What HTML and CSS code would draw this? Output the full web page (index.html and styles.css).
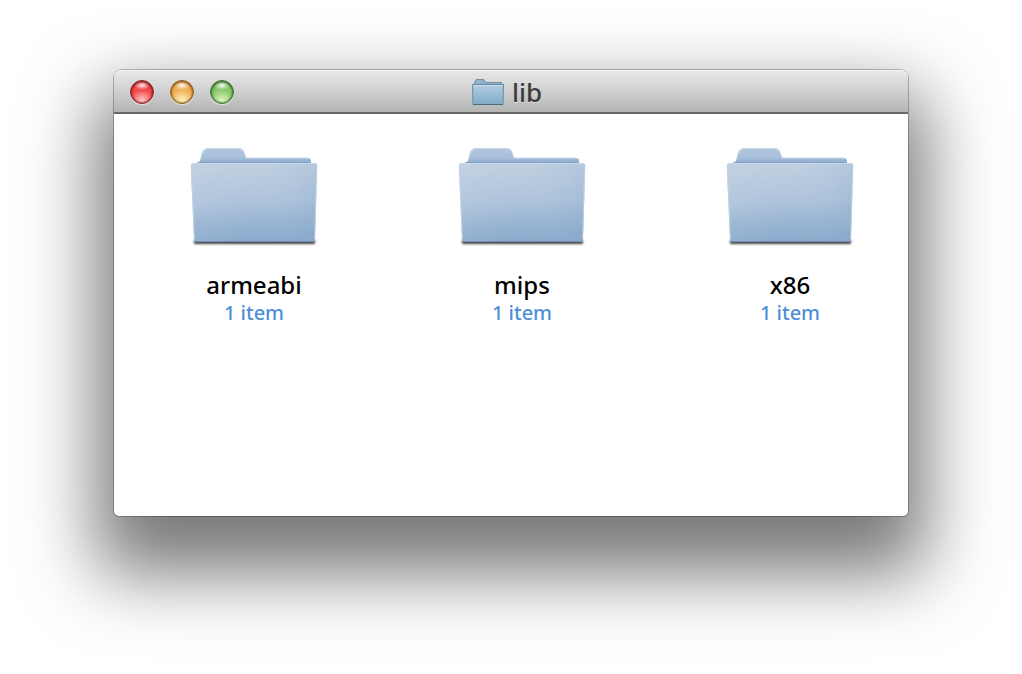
FILE: index.html
```html
<!DOCTYPE html>
<html lang="en">
<head>
<meta charset="utf-8">
<title>lib</title>
<link rel="stylesheet" href="styles.css">
</head>
<body>
<svg class="defs" aria-hidden="true">
  <defs>
    <linearGradient id="front" x1="0.4" y1="0" x2="0.5" y2="1">
      <stop offset="0" stop-color="#c1d0e1"/>
      <stop offset="0.5" stop-color="#adc3db"/>
      <stop offset="0.8" stop-color="#95b2d1"/>
      <stop offset="1" stop-color="#8baacc"/>
    </linearGradient>
    <linearGradient id="sheen" x1="0" y1="0" x2="1" y2="0">
      <stop offset="0" stop-color="#fff" stop-opacity="0.04"/>
      <stop offset="0.5" stop-color="#c3d2e2" stop-opacity="0"/>
      <stop offset="1" stop-color="#85a6cc" stop-opacity="0.2"/>
    </linearGradient>
    <linearGradient id="back" x1="0" y1="0" x2="0" y2="1">
      <stop offset="0" stop-color="#b4c8de"/>
      <stop offset="0.4" stop-color="#a6bfda"/>
      <stop offset="0.66" stop-color="#86a5c8"/>
    </linearGradient>
    <linearGradient id="mini" x1="0" y1="0" x2="0" y2="1">
      <stop offset="0" stop-color="#b3cde0"/>
      <stop offset="1" stop-color="#7faccb"/>
    </linearGradient>
    <filter id="soft" x="-10%" y="-200%" width="120%" height="500%"><feGaussianBlur stdDeviation="1"/></filter>
    <symbol id="folder" viewBox="0 0 128 100">
      <rect x="4" y="92" width="121" height="4" rx="1" fill="#222" opacity="0.85" filter="url(#soft)"/>
      <path d="M7 24V16q0-2 3-3l2-8q1-4.500 5-4.500H49q4 0 5 4L56 10H118q3 0 3 3v11z" fill="url(#back)"/>
      <path d="M13 6q1-5 4-5.500H49q4 0 5 4L56 10H118" fill="none" stroke="#c6d5e5" stroke-width="1"/>
      <path d="M7 14.500H121" stroke="#7d9fc6" stroke-width="1" opacity="0.6"/>
      <path d="M4 15H124q3.500 0 3.300 3.500L125 92q0 2-2 2H6q-2 0-2-2L.7 18.500Q.5 15 4 15z" fill="url(#front)"/>
      <path d="M4 15H124q3.500 0 3.300 3.500L125 92q0 2-2 2H6q-2 0-2-2L.7 18.500Q.5 15 4 15z" fill="url(#sheen)"/>
      <path d="M2 16.500q1-1 3-1H123q2 0 3 1" fill="none" stroke="#c8d6e6"/>
      <path d="M1.300 19 4.500 91M126.700 19 124.500 91" stroke="#c8d7e6" stroke-width="1" opacity="0.7"/>
      <path d="M5 93.500H124" stroke="#6f8fb4" stroke-width="1"/>
      <path d="M87 21h1M44 10h1M32 25h1M106 22h1M113 42h1M124 46h1M68 63h1M54 40h1M73 42h1M21 57h1M83 30h1M103 71h1M76 69h1M29 73h1M114 87h1M91 56h1M63 50h1M18 36h1M96 83h1M46 67h1M116 30h1" stroke="#7797bd" stroke-width="1" opacity="0.4"/>
    </symbol>
    <symbol id="folder-mini" viewBox="0 0 32 26">
      <path d="M2.500 5V3.500L4 .5H12l1.500 3H29.500V6H2.500z" fill="#91b4cd" stroke="#6f91a9"/>
      <path d="M.5 5.500H31.500L31 25.500H1z" fill="url(#mini)" stroke="#668ca6"/>
      <path d="M1.500 6.500H30.500" stroke="#c9dde9"/>
      <path d="M1 25.500H31" stroke="#456a82"/>
    </symbol>
  </defs>
</svg>
<main class="window">
  <header class="titlebar">
    <div class="controls">
      <button class="light close" aria-label="Close"></button>
      <button class="light minimize" aria-label="Minimize"></button>
      <button class="light zoom" aria-label="Zoom"></button>
    </div>
    <h1 class="title"><svg class="title-icon" aria-hidden="true"><use href="#folder-mini"/></svg>lib</h1>
  </header>
  <ul class="items">
    <li><a class="item" href="#armeabi"><svg class="item-icon" aria-hidden="true"><use href="#folder"/></svg><span class="name">armeabi</span><span class="info">1 item</span></a></li>
    <li><a class="item" href="#mips"><svg class="item-icon" aria-hidden="true"><use href="#folder"/></svg><span class="name">mips</span><span class="info">1 item</span></a></li>
    <li><a class="item" href="#x86"><svg class="item-icon" aria-hidden="true"><use href="#folder"/></svg><span class="name">x86</span><span class="info">1 item</span></a></li>
  </ul>
</main>
</body>
</html>
```
FILE: styles.css
```css
* {
  box-sizing: border-box;
}

body {
  margin: 0;
  min-height: 100vh;
  padding: 70px 114px 158px;
  display: flex;
  background: #fff;
  font-family: "Noto Sans", "Open Sans", sans-serif;
}

.defs {
  position: absolute;
  width: 0;
  height: 0;
}

.window {
  flex: 1;
  background: #fff;
  border-radius: 8px 8px 5px 5px;
  box-shadow: 0 0 0 1px rgba(0, 0, 0, 0.25), 0 40px 72px 18px rgba(0, 0, 0, 0.53);
}

.titlebar {
  height: 44px;
  padding: 2px 24px 0 16px;
  display: grid;
  grid-template-columns: 1fr auto 1fr;
  align-items: center;
  border-bottom: 2px solid #686868;
  border-radius: 8px 8px 0 0;
  background: linear-gradient(#e9e9e9, #d0d0d0 50%, #b4b4b4);
  box-shadow: inset 0 1px 0 #f4f4f4;
}

.controls {
  display: flex;
  gap: 16px;
}

.light {
  width: 24px;
  height: 24px;
  padding: 0;
  border: 1px solid;
  border-radius: 50%;
}

.close {
  border-color: #86282a;
  background:
    radial-gradient(ellipse 8px 5px at 50% 18%, rgba(255, 255, 255, 0.9), transparent),
    radial-gradient(ellipse 12px 11px at 50% 90%, #fccfcd, transparent),
    #f34a4b;
  box-shadow: inset 0 1px 3px #6d1013, inset 0 0 2px #8f2527, 0 1px 1px rgba(255, 255, 255, 0.6);
}

.minimize {
  border-color: #8a5b22;
  background:
    radial-gradient(ellipse 8px 5px at 50% 18%, rgba(255, 255, 255, 0.95), transparent),
    radial-gradient(ellipse 12px 11px at 50% 90%, #fdf6c0, transparent),
    #f0b056;
  box-shadow: inset 0 1px 3px #834808, inset 0 0 2px #99672a, 0 1px 1px rgba(255, 255, 255, 0.6);
}

.zoom {
  border-color: #40702e;
  background:
    radial-gradient(ellipse 8px 5px at 50% 18%, rgba(255, 255, 255, 0.95), transparent),
    radial-gradient(ellipse 12px 11px at 50% 90%, #e2f6c8, transparent),
    #88c96a;
  box-shadow: inset 0 1px 3px #225311, inset 0 0 2px #427430, 0 1px 1px rgba(255, 255, 255, 0.6);
}

.title {
  margin: 0;
  display: flex;
  align-items: center;
  gap: 8px;
  color: #3c3c3c;
  font-size: 26px;
  font-weight: 500;
  line-height: 36px;
  text-shadow: 0 1px 0 rgba(255, 255, 255, 0.5);
}

.title-icon {
  width: 32px;
  height: 26px;
}

.items {
  margin: 0;
  padding: 34px 38px 34px 60px;
  display: flex;
  justify-content: space-between;
  list-style: none;
}

.item {
  width: 160px;
  display: flex;
  flex-direction: column;
  align-items: center;
  text-align: center;
  text-decoration: none;
}

.item-icon {
  width: 128px;
  height: 100px;
  margin-bottom: 22px;
}

.name {
  color: #000;
  font-size: 24px;
  font-weight: 500;
  line-height: 30px;
}

.info {
  color: #4f8fd9;
  font-size: 20px;
  font-weight: 500;
  line-height: 26px;
}
```
